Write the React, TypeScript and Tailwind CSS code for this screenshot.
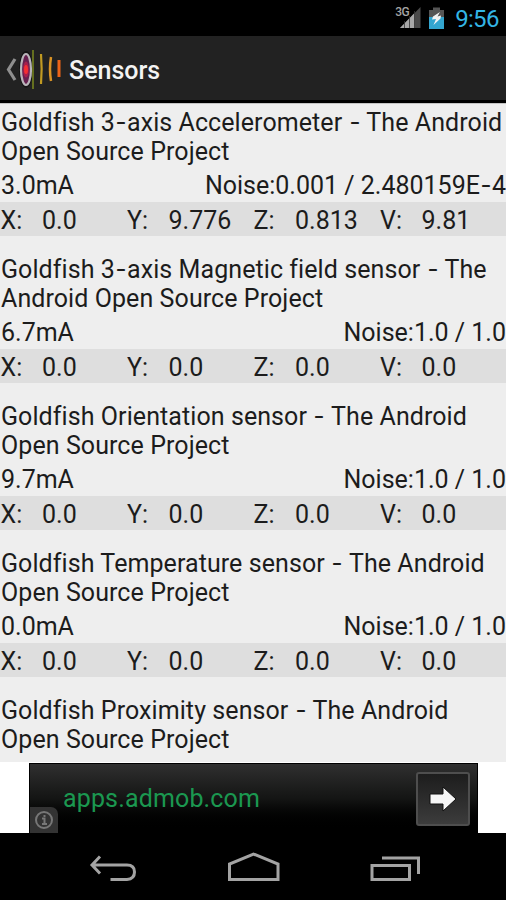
import { Fragment } from 'react';

type Sensor = {
  name: string[];
  power?: string;
  noise?: string;
  values?: string[];
};

const AXES = ['X:', 'Y:', 'Z:', 'V:'];

const SENSORS: Sensor[] = [
  {
    name: ['Goldfish 3-axis Accelerometer - The Android', 'Open Source Project'],
    power: '3.0mA',
    noise: 'Noise:0.001 / 2.480159E-4',
    values: ['0.0', '9.776', '0.813', '9.81'],
  },
  {
    name: ['Goldfish 3-axis Magnetic field sensor - The', 'Android Open Source Project'],
    power: '6.7mA',
    noise: 'Noise:1.0 / 1.0',
    values: ['0.0', '0.0', '0.0', '0.0'],
  },
  {
    name: ['Goldfish Orientation sensor - The Android', 'Open Source Project'],
    power: '9.7mA',
    noise: 'Noise:1.0 / 1.0',
    values: ['0.0', '0.0', '0.0', '0.0'],
  },
  {
    name: ['Goldfish Temperature sensor - The Android', 'Open Source Project'],
    power: '0.0mA',
    noise: 'Noise:1.0 / 1.0',
    values: ['0.0', '0.0', '0.0', '0.0'],
  },
  {
    name: ['Goldfish Proximity sensor - The Android', 'Open Source Project'],
  },
];

// Hyphens are set wider than the font's own glyph
function Label({ text }: { text: string }) {
  return (
    <>
      {text.split('-').map((part, i) => (
        <Fragment key={i}>
          {i > 0 && <span className="inline-block w-[12px] origin-center scale-x-130 text-center">-</span>}
          {part}
        </Fragment>
      ))}
    </>
  );
}

function StatusBar() {
  return (
    <div className="flex h-9 shrink-0 items-center justify-end bg-black pr-[8px]">
      <div className="relative h-[22px] w-[27px]">
        <span className="absolute -top-[2px] left-[1px] text-[12px] leading-[14px] font-medium tracking-[-0.5px] text-[#a5a5a5]">3G</span>
        <svg className="absolute inset-0" width="27" height="22" viewBox="0 0 27 22">
          <path d="M26.500 0V21H6Z" fill="#4a4a4a" />
          <path d="M20.500 6V21H6Z" fill="#a8a8a8" />
          <path d="M10.500 14V21M15.500 9V21M20.500 4V21" stroke="#333" strokeWidth="0.800" />
        </svg>
      </div>
      <svg className="ml-[7px]" width="17" height="22" viewBox="0 0 17 22">
        <path d="M5 0.500H12V3H16V11H1V3H5Z" fill="#555" />
        <path d="M1 10H16V22H1Z" fill="#33a5cf" />
        <path d="M12 5L5 9.500L4 12.500L8 12L5.500 18L12.500 11.500L13 8.500L9.500 9.500Z" fill="#f2f2f2" />
      </svg>
      <span className="-mr-[0.7px] ml-[10px] pt-[2px] text-[24px] leading-[34px] tracking-[-0.7px] text-[#33b5e5]">9:56</span>
    </div>
  );
}

function ActionBar() {
  return (
    <div className="flex h-[67px] shrink-0 items-center border-b-[3px] border-black bg-[#222222] pt-[2px] pl-[6px]">
      <svg width="58" height="46" viewBox="0 0 58 46">
        <path d="M9 13L2.500 23.500L9 34" fill="none" stroke="#8f8f8f" strokeWidth="3.200" />
        <ellipse cx="20" cy="23.500" rx="7" ry="18.500" fill="#151515" />
        <ellipse cx="20" cy="23.500" rx="5" ry="15.500" fill="#66204f" stroke="#b9b4b9" strokeWidth="2.200" />
        <ellipse cx="20" cy="23.500" rx="2.800" ry="8" fill="#a81f4c" />
        <ellipse cx="20" cy="23.500" rx="2" ry="4.500" fill="#f52f32" />
        <path d="M27 4V43" stroke="#7b8a1f" strokeWidth="1.500" />
        <path d="M35 8Q36.300 23 35 38" fill="none" stroke="#c19a22" strokeWidth="2.200" />
        <path d="M45 11Q43 23 45 35" fill="none" stroke="#dc9425" strokeWidth="2.500" />
        <path d="M53 14V31" stroke="#ed6418" strokeWidth="3" />
      </svg>
      <h1 className="ml-[5px] pt-[4px] text-[25px] leading-[30px] font-medium text-[#f3f3f3]">Sensors</h1>
    </div>
  );
}

function SensorRow({ sensor }: { sensor: Sensor }) {
  return (
    <li className="h-[147px] shrink-0 pt-[4px]">
      <h2 className="pl-px leading-[29px] tracking-[0.08px] whitespace-nowrap">
        {sensor.name.map((line) => (
          <span key={line} className="block"><Label text={line} /></span>
        ))}
      </h2>
      {sensor.power && sensor.noise && (
        <div className="mt-[4px] flex h-[32px] justify-between pl-px leading-[32px]">
          <span>{sensor.power}</span>
          <span><Label text={sensor.noise} /></span>
        </div>
      )}
      {sensor.values && (
        <dl className="grid h-[34px] grid-cols-4 bg-[#dedede] leading-[37px]">
          {sensor.values.map((value, i) => (
            <div key={AXES[i]} className="flex">
              <dt className="w-[42px] pl-[0.5px]">{AXES[i]}</dt>
              <dd>{value}</dd>
            </div>
          ))}
        </dl>
      )}
    </li>
  );
}

function AdBanner() {
  return (
    <div className="flex h-[71px] shrink-0 bg-white pt-px pr-[28px] pl-[29px]">
      <div className="relative flex w-full items-center justify-between border border-b-0 border-black bg-linear-to-b from-[#303030] via-[#141514] to-black pr-[7px] pl-[33px]">
        <span className="text-[25px] leading-[30px] tracking-[0.15px] text-[#1b9850]">apps.admob.com</span>
        <div className="flex h-[54px] w-[54px] items-center justify-center rounded-[3px] border-2 border-[#4e4e4e] bg-linear-to-b from-[#1d1d1d] to-[#3c3c3c]">
          <svg width="28" height="26" viewBox="0 0 28 26">
            <path d="M1 8H14V1L27 13L14 25V18H1Z" fill="#f5f5f5" stroke="#111" strokeWidth="1" />
          </svg>
        </div>
        <div className="absolute bottom-0 left-0 flex h-[26px] w-[28px] items-center justify-center rounded-tr-[7px] bg-[#333]">
          <svg width="20" height="20" viewBox="0 0 20 20" fill="none" stroke="#777">
            <circle cx="10" cy="10" r="8" strokeWidth="2" />
            <path d="M8 8.500H10.500V14M8 14H13M10.500 5V7" strokeWidth="2" />
          </svg>
        </div>
      </div>
    </div>
  );
}

function NavBar() {
  return (
    <nav className="flex h-[67px] shrink-0 bg-black pt-[16px] pl-[88px]">
      <svg width="50" height="34" viewBox="0 0 50 34" fill="none" stroke="#a3a3a3" strokeWidth="3">
        <path d="M12 7.500L4 16L12 24.500M4 16H39Q46.500 16 46.500 23T39 30.500H22.500" />
      </svg>
      <svg className="ml-[88px]" width="56" height="34" viewBox="0 0 56 34" fill="none" stroke="#a3a3a3" strokeWidth="3">
        <path d="M3.500 30.500V15L27.500 5L52 15V30.500Z" />
      </svg>
      <svg className="ml-[87px]" width="52" height="34" viewBox="0 0 52 34" fill="none" stroke="#a3a3a3" strokeWidth="3">
        <path d="M3 16.500H40.500V30.500H3ZM13 9H49.500V25" />
      </svg>
    </nav>
  );
}

export default function App() {
  return (
    <div className="flex h-[900px] w-[506px] flex-col overflow-hidden bg-black font-[Roboto,sans-serif]">
      <StatusBar />
      <ActionBar />
      <ul className="flex min-h-0 flex-1 flex-col overflow-hidden border-t border-[#c4c4c4] bg-[#eeeeee] text-[25px] text-[#1c1c1c]">
        {SENSORS.map((sensor) => (
          <SensorRow key={sensor.name[0]} sensor={sensor} />
        ))}
      </ul>
      <AdBanner />
      <NavBar />
    </div>
  );
}
